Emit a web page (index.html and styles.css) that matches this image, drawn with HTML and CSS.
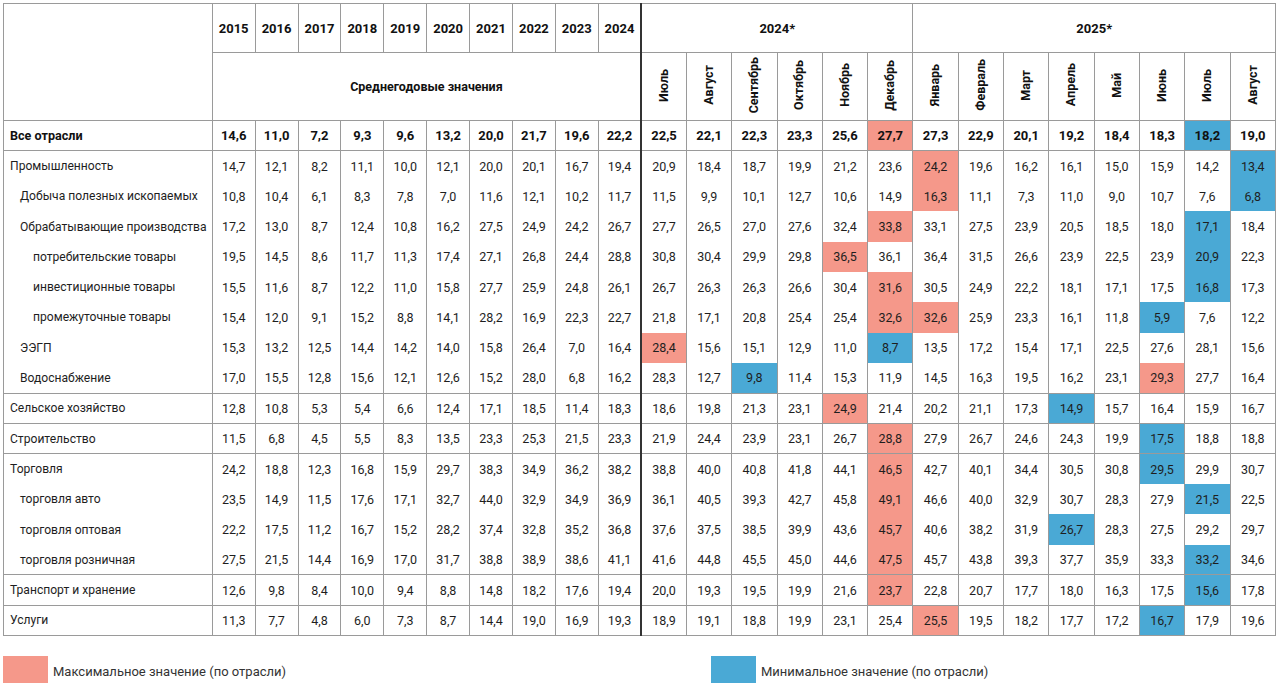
FILE: index.html
```html
<!DOCTYPE html>
<html lang="ru">
<head>
<meta charset="utf-8">
<title>Таблица</title>
<link rel="stylesheet" href="styles.css">
</head>
<body>
<table class="grid">
<colgroup>
<col class="c-label">
<col class="c-year"><col class="c-year"><col class="c-year"><col class="c-year"><col class="c-year">
<col class="c-year"><col class="c-year"><col class="c-year"><col class="c-year"><col class="c-year">
<col class="c-m"><col class="c-m"><col class="c-m"><col class="c-m"><col class="c-m"><col class="c-m"><col class="c-m">
<col class="c-m"><col class="c-m"><col class="c-m"><col class="c-m"><col class="c-m"><col class="c-m"><col class="c-m">
</colgroup>
<thead>
<tr class="h1">
<th rowspan="2"></th>
<th>2015</th><th>2016</th><th>2017</th><th>2018</th><th>2019</th><th>2020</th><th>2021</th><th>2022</th><th>2023</th><th>2024</th>
<th colspan="6" class="thick">2024*</th>
<th colspan="8">2025*</th>
</tr>
<tr class="h2">
<th colspan="10">Среднегодовые значения</th>
<th class="thick"><span class="rot">Июль</span></th>
<th><span class="rot">Август</span></th>
<th><span class="rot">Сентябрь</span></th>
<th><span class="rot">Октябрь</span></th>
<th><span class="rot">Ноябрь</span></th>
<th><span class="rot">Декабрь</span></th>
<th><span class="rot">Январь</span></th>
<th><span class="rot">Февраль</span></th>
<th><span class="rot">Март</span></th>
<th><span class="rot">Апрель</span></th>
<th><span class="rot">Май</span></th>
<th><span class="rot">Июнь</span></th>
<th><span class="rot">Июль</span></th>
<th><span class="rot">Август</span></th>
</tr>
</thead>
<tbody class="total">
<tr><td class="lab">Все отрасли</td><td>14,6</td><td>11,0</td><td>7,2</td><td>9,3</td><td>9,6</td><td>13,2</td><td>20,0</td><td>21,7</td><td>19,6</td><td>22,2</td><td>22,5</td><td>22,1</td><td>22,3</td><td>23,3</td><td>25,6</td><td class="mx">27,7</td><td>27,3</td><td>22,9</td><td>20,1</td><td>19,2</td><td>18,4</td><td>18,3</td><td class="mn">18,2</td><td>19,0</td></tr>
</tbody>
<tbody>
<tr><td class="lab">Промышленность</td><td>14,7</td><td>12,1</td><td>8,2</td><td>11,1</td><td>10,0</td><td>12,1</td><td>20,0</td><td>20,1</td><td>16,7</td><td>19,4</td><td>20,9</td><td>18,4</td><td>18,7</td><td>19,9</td><td>21,2</td><td>23,6</td><td class="mx">24,2</td><td>19,6</td><td>16,2</td><td>16,1</td><td>15,0</td><td>15,9</td><td>14,2</td><td class="mn">13,4</td></tr>
<tr><td class="lab l2">Добыча полезных ископаемых</td><td>10,8</td><td>10,4</td><td>6,1</td><td>8,3</td><td>7,8</td><td>7,0</td><td>11,6</td><td>12,1</td><td>10,2</td><td>11,7</td><td>11,5</td><td>9,9</td><td>10,1</td><td>12,7</td><td>10,6</td><td>14,9</td><td class="mx">16,3</td><td>11,1</td><td>7,3</td><td>11,0</td><td>9,0</td><td>10,7</td><td>7,6</td><td class="mn">6,8</td></tr>
<tr><td class="lab l2">Обрабатывающие производства</td><td>17,2</td><td>13,0</td><td>8,7</td><td>12,4</td><td>10,8</td><td>16,2</td><td>27,5</td><td>24,9</td><td>24,2</td><td>26,7</td><td>27,7</td><td>26,5</td><td>27,0</td><td>27,6</td><td>32,4</td><td class="mx">33,8</td><td>33,1</td><td>27,5</td><td>23,9</td><td>20,5</td><td>18,5</td><td>18,0</td><td class="mn">17,1</td><td>18,4</td></tr>
<tr><td class="lab l3">потребительские товары</td><td>19,5</td><td>14,5</td><td>8,6</td><td>11,7</td><td>11,3</td><td>17,4</td><td>27,1</td><td>26,8</td><td>24,4</td><td>28,8</td><td>30,8</td><td>30,4</td><td>29,9</td><td>29,8</td><td class="mx">36,5</td><td>36,1</td><td>36,4</td><td>31,5</td><td>26,6</td><td>23,9</td><td>22,5</td><td>23,9</td><td class="mn">20,9</td><td>22,3</td></tr>
<tr><td class="lab l3">инвестиционные товары</td><td>15,5</td><td>11,6</td><td>8,7</td><td>12,2</td><td>11,0</td><td>15,8</td><td>27,7</td><td>25,9</td><td>24,8</td><td>26,1</td><td>26,7</td><td>26,3</td><td>26,3</td><td>26,6</td><td>30,4</td><td class="mx">31,6</td><td>30,5</td><td>24,9</td><td>22,2</td><td>18,1</td><td>17,1</td><td>17,5</td><td class="mn">16,8</td><td>17,3</td></tr>
<tr><td class="lab l3">промежуточные товары</td><td>15,4</td><td>12,0</td><td>9,1</td><td>15,2</td><td>8,8</td><td>14,1</td><td>28,2</td><td>16,9</td><td>22,3</td><td>22,7</td><td>21,8</td><td>17,1</td><td>20,8</td><td>25,4</td><td>25,4</td><td class="mx">32,6</td><td class="mx">32,6</td><td>25,9</td><td>23,3</td><td>16,1</td><td>11,8</td><td class="mn">5,9</td><td>7,6</td><td>12,2</td></tr>
<tr><td class="lab l2">ЭЭГП</td><td>15,3</td><td>13,2</td><td>12,5</td><td>14,4</td><td>14,2</td><td>14,0</td><td>15,8</td><td>26,4</td><td>7,0</td><td>16,4</td><td class="mx">28,4</td><td>15,6</td><td>15,1</td><td>12,9</td><td>11,0</td><td class="mn">8,7</td><td>13,5</td><td>17,2</td><td>15,4</td><td>17,1</td><td>22,5</td><td>27,6</td><td>28,1</td><td>15,6</td></tr>
<tr><td class="lab l2">Водоснабжение</td><td>17,0</td><td>15,5</td><td>12,8</td><td>15,6</td><td>12,1</td><td>12,6</td><td>15,2</td><td>28,0</td><td>6,8</td><td>16,2</td><td>28,3</td><td>12,7</td><td class="mn">9,8</td><td>11,4</td><td>15,3</td><td>11,9</td><td>14,5</td><td>16,3</td><td>19,5</td><td>16,2</td><td>23,1</td><td class="mx">29,3</td><td>27,7</td><td>16,4</td></tr>
</tbody>
<tbody>
<tr><td class="lab">Сельское хозяйство</td><td>12,8</td><td>10,8</td><td>5,3</td><td>5,4</td><td>6,6</td><td>12,4</td><td>17,1</td><td>18,5</td><td>11,4</td><td>18,3</td><td>18,6</td><td>19,8</td><td>21,3</td><td>23,1</td><td class="mx">24,9</td><td>21,4</td><td>20,2</td><td>21,1</td><td>17,3</td><td class="mn">14,9</td><td>15,7</td><td>16,4</td><td>15,9</td><td>16,7</td></tr>
</tbody>
<tbody>
<tr><td class="lab">Строительство</td><td>11,5</td><td>6,8</td><td>4,5</td><td>5,5</td><td>8,3</td><td>13,5</td><td>23,3</td><td>25,3</td><td>21,5</td><td>23,3</td><td>21,9</td><td>24,4</td><td>23,9</td><td>23,1</td><td>26,7</td><td class="mx">28,8</td><td>27,9</td><td>26,7</td><td>24,6</td><td>24,3</td><td>19,9</td><td class="mn">17,5</td><td>18,8</td><td>18,8</td></tr>
</tbody>
<tbody>
<tr><td class="lab">Торговля</td><td>24,2</td><td>18,8</td><td>12,3</td><td>16,8</td><td>15,9</td><td>29,7</td><td>38,3</td><td>34,9</td><td>36,2</td><td>38,2</td><td>38,8</td><td>40,0</td><td>40,8</td><td>41,8</td><td>44,1</td><td class="mx">46,5</td><td>42,7</td><td>40,1</td><td>34,4</td><td>30,5</td><td>30,8</td><td class="mn">29,5</td><td>29,9</td><td>30,7</td></tr>
<tr><td class="lab l2">торговля авто</td><td>23,5</td><td>14,9</td><td>11,5</td><td>17,6</td><td>17,1</td><td>32,7</td><td>44,0</td><td>32,9</td><td>34,9</td><td>36,9</td><td>36,1</td><td>40,5</td><td>39,3</td><td>42,7</td><td>45,8</td><td class="mx">49,1</td><td>46,6</td><td>40,0</td><td>32,9</td><td>30,7</td><td>28,3</td><td>27,9</td><td class="mn">21,5</td><td>22,5</td></tr>
<tr><td class="lab l2">торговля оптовая</td><td>22,2</td><td>17,5</td><td>11,2</td><td>16,7</td><td>15,2</td><td>28,2</td><td>37,4</td><td>32,8</td><td>35,2</td><td>36,8</td><td>37,6</td><td>37,5</td><td>38,5</td><td>39,9</td><td>43,6</td><td class="mx">45,7</td><td>40,6</td><td>38,2</td><td>31,9</td><td class="mn">26,7</td><td>28,3</td><td>27,5</td><td>29,2</td><td>29,7</td></tr>
<tr><td class="lab l2">торговля розничная</td><td>27,5</td><td>21,5</td><td>14,4</td><td>16,9</td><td>17,0</td><td>31,7</td><td>38,8</td><td>38,9</td><td>38,6</td><td>41,1</td><td>41,6</td><td>44,8</td><td>45,5</td><td>45,0</td><td>44,6</td><td class="mx">47,5</td><td>45,7</td><td>43,8</td><td>39,3</td><td>37,7</td><td>35,9</td><td>33,3</td><td class="mn">33,2</td><td>34,6</td></tr>
</tbody>
<tbody>
<tr><td class="lab">Транспорт и хранение</td><td>12,6</td><td>9,8</td><td>8,4</td><td>10,0</td><td>9,4</td><td>8,8</td><td>14,8</td><td>18,2</td><td>17,6</td><td>19,4</td><td>20,0</td><td>19,3</td><td>19,5</td><td>19,9</td><td>21,6</td><td class="mx">23,7</td><td>22,8</td><td>20,7</td><td>17,7</td><td>18,0</td><td>16,3</td><td>17,5</td><td class="mn">15,6</td><td>17,8</td></tr>
</tbody>
<tbody>
<tr><td class="lab">Услуги</td><td>11,3</td><td>7,7</td><td>4,8</td><td>6,0</td><td>7,3</td><td>8,7</td><td>14,4</td><td>19,0</td><td>16,9</td><td>19,3</td><td>18,9</td><td>19,1</td><td>18,8</td><td>19,9</td><td>23,1</td><td>25,4</td><td class="mx">25,5</td><td>19,5</td><td>18,2</td><td>17,7</td><td>17,2</td><td class="mn">16,7</td><td>17,9</td><td>19,6</td></tr>
</tbody>
</table>
<div class="legend">
<div class="legend-item"><span class="swatch sw-max"></span><span class="legend-text">Максимальное значение (по отрасли)</span></div>
<div class="legend-item"><span class="swatch sw-min"></span><span class="legend-text">Минимальное значение (по отрасли)</span></div>
</div>
</body>
</html>
```
FILE: styles.css
```css
html, body {
  margin: 0;
  padding: 0;
  background: #ffffff;
}
body {
  padding: 3px;
  font-family: Roboto, "Liberation Sans", sans-serif;
  color: #1e1e1e;
}
.grid {
  border-collapse: collapse;
  table-layout: fixed;
  width: 1273px;
  border: 1px solid #9a9a9a;
  font-size: 12.5px;
}
.c-label { width: 208.7px; }
.c-year { width: 42.9px; }
.c-m { width: 45.3px; }
.grid th, .grid td {
  border: 1px solid #9a9a9a;
  padding: 0;
  text-align: center;
  vertical-align: middle;
  white-space: nowrap;
  overflow: hidden;
}
.grid th {
  font-weight: 700;
  color: #111;
  font-size: 13px;
}
.h1 { height: 49px; }
.h2 { height: 68px; }
.h2 th { font-size: 12.5px; }
.rot {
  display: inline-block;
  writing-mode: vertical-rl;
  transform: rotate(180deg);
  line-height: 1;
}
.grid tbody tr {
  height: 30.3px;
}
.grid tbody td {
  border-top: 0;
  border-bottom: 0;
}
.grid tbody tr:first-child td {
  border-top: 1px solid #9a9a9a;
}
.grid tbody tr:last-child td {
  border-bottom: 1px solid #9a9a9a;
}
.grid tbody td:nth-child(12),
.grid th.thick {
  border-left: 2px solid #333;
}
.total td {
  font-weight: 700;
  color: #111;
  font-size: 13px;
}
.grid td.lab {
  text-align: left;
  padding-left: 6px;
  font-size: 12.1px;
}
.total td.lab { font-size: 12.6px; }
.grid td.l2 { padding-left: 16px; }
.grid td.l3 { padding-left: 29px; }
.grid td.mx { background: #f5988a; }
.grid td.mn { background: #4aa9d5; }
.legend {
  display: flex;
  margin-top: 20px;
  font-size: 13px;
  color: #333;
}
.legend-item {
  display: flex;
  align-items: center;
  gap: 5px;
}
.legend-item:first-child { width: 708px; }
.legend-text { padding-top: 3px; }
.swatch {
  display: block;
  width: 45px;
  height: 27px;
}
.sw-max { background: #f5988a; }
.sw-min { background: #4aa9d5; }
```
